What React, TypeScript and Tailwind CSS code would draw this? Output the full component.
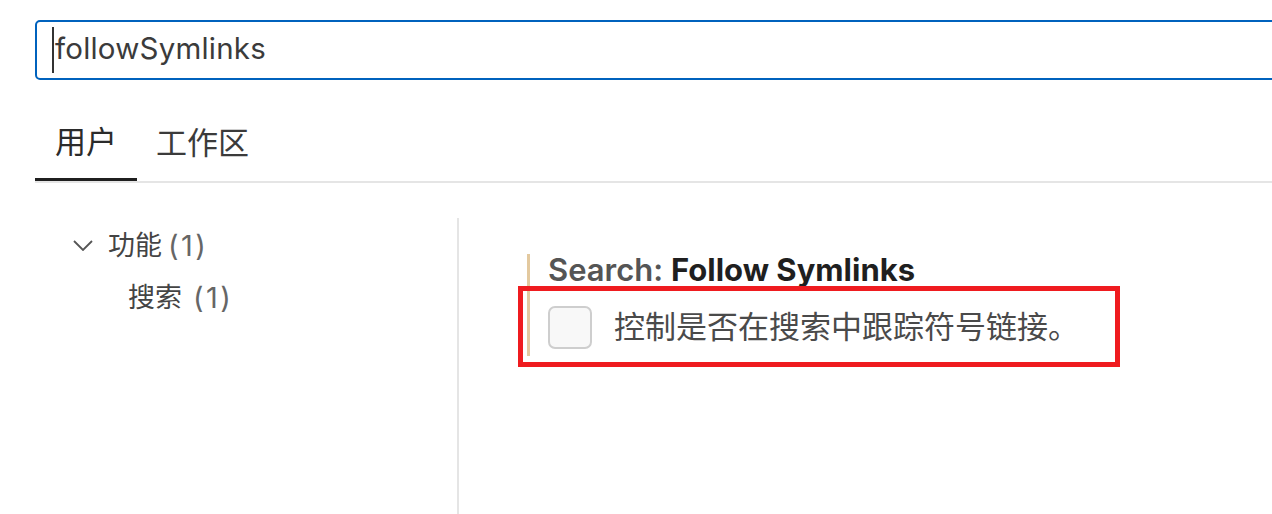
import React from "react";

const font = { fontFamily: '"Inter", "Noto Sans CJK SC", sans-serif' };

export default function App() {
  return (
    <div
      className="relative w-full h-[514px] bg-white overflow-hidden"
      style={font}
    >
      <div className="pl-[35px] pt-[20px]">
        <div className="w-[1300px] h-[60px] border-2 border-[#0062bd] rounded-[5px] flex items-center pl-[15px]">
          <div className="w-[2px] h-[46px] bg-[#333]" />
          <span className="text-[29.5px] tracking-[0.2px] text-[#3b3b3b] leading-none ml-[1px] -mt-[2px]">
            followSymlinks
          </span>
        </div>
      </div>

      <div className="ml-[35px] mt-[20px] flex border-b-2 border-[#e5e5e5]">
        <div className="px-[20px] h-[81px] flex items-center border-b-[3px] border-[#1f1f1f] -mb-[2px] text-[31px] text-[#2b2b2b] pt-[6px]">
          用户
        </div>
        <div className="px-[19px] h-[81px] flex items-center text-[31px] text-[#3b3b3b] pt-[6px]">
          工作区
        </div>
      </div>

      <div className="flex ml-[35px]">
        <div className="w-[422px] pt-[49px] text-[27px]">
          <div className="flex items-center h-[28px] pl-[38px]">
            <svg width="20" height="11" viewBox="0 0 20 11" className="mr-[15px] -mt-[2px]">
              <path d="M1 1 L10 10 L19 1" fill="none" stroke="#555" strokeWidth="1.8" />
            </svg>
            <span className="text-[#444]">功能</span>
            <span className="text-[#666] ml-[6px] text-[29px] tracking-[2.5px]">(1)</span>
          </div>
          <div className="flex items-center h-[28px] pl-[93px] mt-[24px]">
            <span className="text-[#444]">搜索</span>
            <span className="text-[#666] ml-[11px] text-[29px] tracking-[2.5px]">(1)</span>
          </div>
        </div>
        <div className="w-[2px] bg-[#e5e5e5] mt-[35px] h-[310px]" />
        <div className="pt-[71px] pl-[68px]">
          <div className="flex">
            <div className="w-[3px] h-[102px] bg-[#e3c99f]" />
            <div className="pl-[18px]">
              <div className="text-[31px] font-semibold leading-none h-[52px] flex items-start">
                <span className="text-[#555]">Search:&nbsp;</span>
                <span className="text-[#1f1f1f] font-bold">Follow Symlinks</span>
              </div>
              <div className="flex items-center">
                <div className="w-[44px] h-[43px] rounded-[7px] border-2 border-[#cecece] bg-[#f8f8f8]" />
                <span className="ml-[22px] text-[31px] text-[#4a4a4a] leading-none -mt-[2px]">
                  控制是否在搜索中跟踪符号链接。
                </span>
              </div>
            </div>
          </div>
        </div>
      </div>

      <div className="absolute left-[518px] top-[286px] w-[602px] h-[81px] border-[5px] border-[#ef1b1f]" />
    </div>
  );
}
